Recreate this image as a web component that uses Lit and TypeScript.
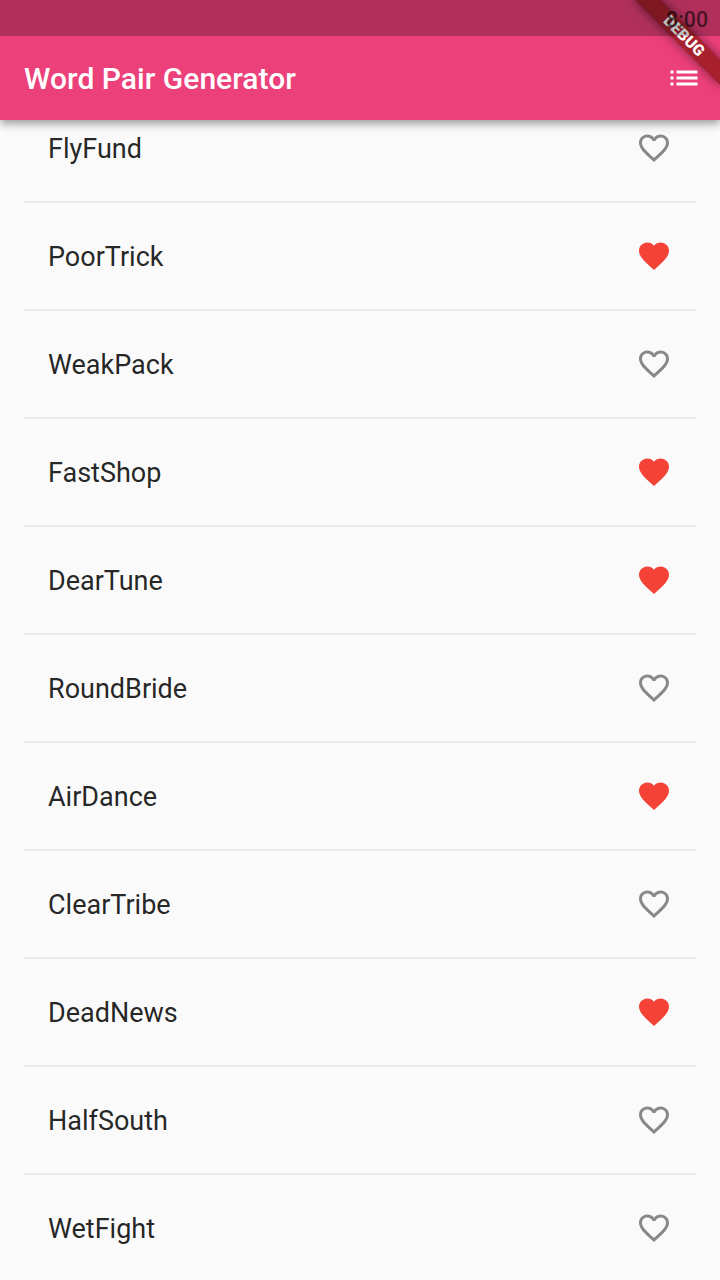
import { LitElement, html, css, svg } from "lit";
import { customElement, property } from "lit/decorators.js";

const FULL = "M12 21.35l-1.45-1.32C5.4 15.36 2 12.28 2 8.5 2 5.42 4.42 3 7.5 3c1.74 0 3.41.81 4.5 2.09C13.09 3.81 14.76 3 16.5 3 19.58 3 22 5.42 22 8.5c0 3.78-3.4 6.86-8.55 11.54L12 21.35z";
const OUTLINE = "M16.5 3c-1.74 0-3.41.81-4.5 2.09C10.91 3.81 9.24 3 7.5 3 4.42 3 2 5.42 2 8.5c0 3.78 3.4 6.86 8.55 11.54L12 21.35l1.45-1.32C18.6 15.36 22 12.28 22 8.5 22 5.42 19.58 3 16.5 3zm-4.4 15.55l-.1.1-.1-.1C7.14 14.24 4 11.39 4 8.5 4 6.5 5.5 5 7.5 5c1.54 0 3.04.99 3.57 2.36h1.87C13.46 5.99 14.96 5 16.5 5c2 0 3.5 1.5 3.5 3.5 0 2.89-3.14 5.74-7.9 10.05z";

@customElement("word-tile")
class WordTile extends LitElement {
  @property() name = "";
  @property({ type: Boolean }) saved = false;

  static styles = css`
    :host { display: flex; align-items: center; justify-content: space-between; height: 106px; padding: 0 24px; }
    .name { padding-top: 2px; font-size: 27px; line-height: 32px; color: rgba(0, 0, 0, 0.87); }
    .heart { display: block; width: 36px; height: 36px; fill: #888; }
    .heart.saved { fill: #f44336; }
  `;

  render() {
    return html`<span class="name">${this.name}</span>
      <svg class="heart ${this.saved ? "saved" : ""}" viewBox="0 0 24 24">${svg`<path d=${this.saved ? FULL : OUTLINE}></path>`}</svg>`;
  }
}

@customElement("app-root")
class AppRoot extends LitElement {
  private pairs: [string, boolean][] = [
    ["FlyFund", false],
    ["PoorTrick", true],
    ["WeakPack", false],
    ["FastShop", true],
    ["DearTune", true],
    ["RoundBride", false],
    ["AirDance", true],
    ["ClearTribe", false],
    ["DeadNews", true],
    ["HalfSouth", false],
    ["WetFight", false],
  ];

  static styles = css`
    :host { display: flex; flex-direction: column; position: relative; width: 720px; height: 1280px; overflow: hidden; background: #fafafa; font-family: Roboto, sans-serif; }
    .header { flex: none; z-index: 1; background: #ec407a; box-shadow: 0 3px 6px -1.5px rgba(0, 0, 0, 0.2), 0 6px 7.5px rgba(0, 0, 0, 0.14), 0 1.5px 15px rgba(0, 0, 0, 0.12); }
    .status { box-sizing: border-box; position: relative; z-index: 3; height: 36px; padding-right: 12px; background: rgba(0, 0, 0, 0.25); text-align: right; font-size: 21.3px; line-height: 39px; font-weight: 500; color: rgba(0, 0, 0, 0.6); }
    .bar { display: flex; align-items: center; justify-content: space-between; height: 84px; padding: 0 18px 0 24px; }
    .title { margin: 0; padding-top: 2px; font-size: 30px; line-height: 36px; font-weight: 500; letter-spacing: 0.03px; color: #fff; }
    .menu { display: block; width: 36px; height: 36px; fill: #fff; }
    .list { flex: 1; min-height: 0; overflow: hidden; padding: 0 24px; }
    .scroll { margin-top: -25px; }
    .divider { height: 2px; background: #ebebeb; }
    .banner { position: absolute; z-index: 2; right: -60px; top: 42px; width: 120px; height: 18px; transform: rotate(45deg); transform-origin: 60px -42px; background: linear-gradient(rgba(183, 28, 28, 0.63), rgba(183, 28, 28, 0.63)), rgba(0, 0, 0, 0.4); box-shadow: 0 0 11px rgba(0, 0, 0, 0.5); color: #fff; font-size: 15.6px; line-height: 18px; letter-spacing: 0.15px; font-weight: 900; text-align: center; }
  `;

  render() {
    return html`
      <header class="header">
        <div class="status">8:00</div>
        <div class="bar">
          <h1 class="title">Word Pair Generator</h1>
          <svg class="menu" viewBox="0 0 24 24"><path d="M3 13h2v-2H3v2zm0 4h2v-2H3v2zm0-8h2V7H3v2zm4 4h14v-2H7v2zm0 4h14v-2H7v2zM7 7v2h14V7H7z"></path></svg>
        </div>
        <div class="banner">DEBUG</div>
      </header>
      <main class="list">
        <div class="scroll">
          ${this.pairs.map(([name, saved]) => html`<word-tile .name=${name} .saved=${saved}></word-tile><div class="divider"></div>`)}
        </div>
      </main>
    `;
  }
}
